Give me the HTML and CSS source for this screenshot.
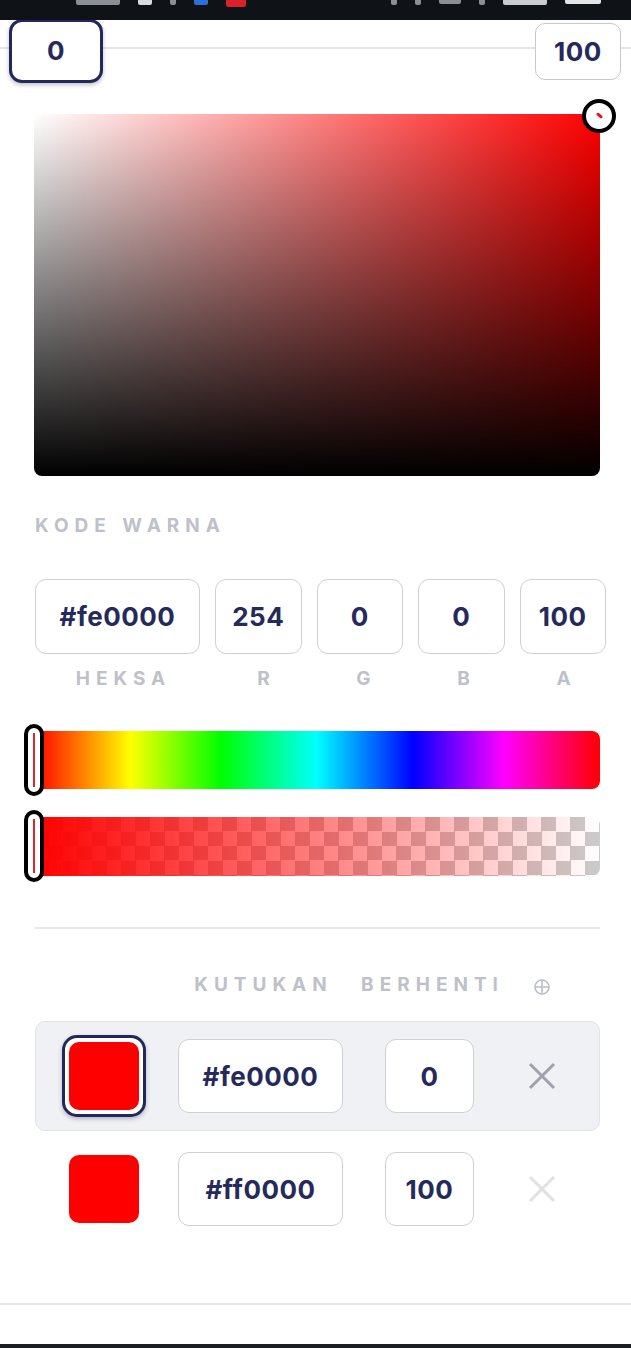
FILE: index.html
```html
<!DOCTYPE html>
<html lang="id">
<head>
  <meta charset="UTF-8">
  <meta name="viewport" content="width=device-width, initial-scale=1.0">
  <title>Pemilih Warna</title>
  <link rel="stylesheet" href="styles.css">
</head>
<body>

  <!-- status bar (cut off at the top of the capture) -->
  <div class="status-bar">
    <span class="sb sb-time"></span>
    <span class="sb sb-chat"></span>
    <span class="sb sb-dot"></span>
    <span class="sb sb-blue"></span>
    <span class="sb sb-red"></span>
    <span class="sb-spacer"></span>
    <span class="sb sb-dot"></span>
    <span class="sb sb-dot"></span>
    <span class="sb sb-speed"></span>
    <span class="sb sb-dot"></span>
    <span class="sb sb-signal"></span>
    <span class="sb sb-battery"></span>
  </div>

  <!-- range of the gradient -->
  <div class="range-row">
    <div class="range-box range-box-active">0</div>
    <div class="range-box">100</div>
  </div>

  <main class="picker">
    <div class="sat-area">
      <span class="sat-handle"></span>
    </div>

    <div class="section-label">KODE WARNA</div>

    <div class="code-row">
      <div class="field field-hex">#fe0000</div>
      <div class="field">254</div>
      <div class="field">0</div>
      <div class="field">0</div>
      <div class="field">100</div>
    </div>
    <div class="code-row code-labels">
      <span class="field-hex">HEKSA</span>
      <span>R</span>
      <span>G</span>
      <span>B</span>
      <span>A</span>
    </div>

    <div class="slider slider-hue">
      <span class="slider-handle"></span>
    </div>
    <div class="slider slider-alpha">
      <span class="slider-handle"></span>
    </div>

    <div class="divider"></div>

    <div class="stops-head">
      <span class="col-swatch"></span>
      <span class="col-hex">KUTUKAN</span>
      <span class="col-stop">BERHENTI</span>
      <span class="col-del">
        <svg width="18" height="18" viewBox="0 0 18 18" fill="none" stroke="#bbbec6" stroke-width="1.6">
          <circle cx="9" cy="9" r="7"/>
          <path d="M9 2v14M2 9h14"/>
        </svg>
      </span>
    </div>

    <div class="stop-row stop-row-active">
      <div class="col-swatch swatch swatch-active"><span class="swatch-color"></span></div>
      <div class="col-hex field">#fe0000</div>
      <div class="col-stop field">0</div>
      <div class="col-del">
        <svg width="28" height="28" viewBox="0 0 28 28" stroke="#9ea1ac" stroke-width="3">
          <path d="M2 2l24 24M26 2L2 26"/>
        </svg>
      </div>
    </div>

    <div class="stop-row">
      <div class="col-swatch swatch"><span class="swatch-color"></span></div>
      <div class="col-hex field">#ff0000</div>
      <div class="col-stop field">100</div>
      <div class="col-del">
        <svg width="28" height="28" viewBox="0 0 28 28" stroke="#e0e1e5" stroke-width="3">
          <path d="M2 2l24 24M26 2L2 26"/>
        </svg>
      </div>
    </div>
  </main>

  <div class="footer-line"></div>
  <div class="nav-bar"></div>

</body>
</html>
```

FILE: styles.css
```css
body {
  margin: 0;
  width: 631px;
  height: 1348px;
  overflow: hidden;
  background-color: #ffffff;
  font-family: Inter, "Noto Sans", sans-serif;
  color: #262a5b;
}

/* Status bar */
.status-bar {
  position: relative;
  z-index: 2;
  height: 20px;
  background-color: #0f1318;
  display: flex;
  align-items: flex-start;
  padding-left: 76px;
  padding-right: 30px;
}

.sb {
  display: block;
  height: 5px;
  margin-right: 18px;
  background-color: #8a8e95;
  border-radius: 0 0 2px 2px;
}

.sb-time { width: 44px; }
.sb-chat { width: 14px; background-color: #d8dadd; }
.sb-dot { width: 6px; }
.sb-blue { width: 14px; background-color: #2d6fd6; }
.sb-red { width: 20px; height: 7px; background-color: #d8212b; }
.sb-spacer { flex: 1; }
.sb-speed { width: 22px; height: 4px; }
.sb-signal { width: 44px; background-color: #c9cbce; }
.sb-battery { width: 36px; height: 4px; margin-right: 0; background-color: #e4e5e7; }

/* Range row */
.range-row {
  height: 62px;
  padding: 0 10px 0 9px;
  display: flex;
  align-items: center;
  justify-content: space-between;
  background: linear-gradient(#e4e4e7, #e4e4e7) 0 27px / 100% 2px no-repeat;
}

.range-box {
  width: 86px;
  height: 57px;
  box-sizing: border-box;
  border: 1.5px solid #c8c8cd;
  border-radius: 10px;
  background-color: #fff;
  display: flex;
  align-items: center;
  justify-content: center;
  font-size: 26px;
  font-weight: 700;
  letter-spacing: 0.5px;
}

.range-box-active {
  width: 94px;
  height: 64px;
  margin-top: -1px;
  border: 3px solid #23285a;
  border-radius: 13px;
  box-shadow: 0 2px 4px rgba(35, 40, 90, 0.3);
}

/* Picker */
.picker {
  padding: 0 31px 0 34px;
}

.sat-area {
  position: relative;
  margin-top: 32px;
  height: 362px;
  border-radius: 8px;
  background:
    linear-gradient(to top, #000000, rgba(0, 0, 0, 0)),
    linear-gradient(to right, #ffffff, #fe0000);
}

.sat-handle {
  position: absolute;
  top: -15px;
  right: -16px;
  width: 34px;
  height: 34px;
  box-sizing: border-box;
  border: 4px solid #000;
  border-radius: 50%;
  background-color: #fff;
}

.sat-handle::after {
  content: "";
  position: absolute;
  left: 10px;
  top: 11px;
  width: 7px;
  height: 3px;
  border-radius: 2px;
  background-color: #e8101a;
  transform: rotate(40deg);
}

.section-label,
.code-labels,
.stops-head {
  font-size: 19px;
  font-weight: 700;
  letter-spacing: 6px;
  line-height: 22px;
  color: #bec1c9;
}

.section-label {
  margin-top: 39px;
  padding-left: 1px;
}

.code-row {
  margin-top: 42px;
  margin-left: 1px;
  margin-right: -6px;
  display: flex;
  gap: 15px;
}

.code-row > * {
  flex: 1;
}

.code-row > .field-hex {
  flex: 0 0 165px;
}

.field {
  height: 75px;
  box-sizing: border-box;
  border: 1.5px solid #cfd0d6;
  border-radius: 11px;
  background-color: #fff;
  display: flex;
  align-items: center;
  justify-content: center;
  font-size: 26px;
  font-weight: 700;
  letter-spacing: 0.5px;
  color: #262a5b;
}

.code-labels {
  margin-top: 14px;
}

.code-labels span {
  text-align: center;
  padding-left: 6px;
}

/* Sliders */
.slider {
  position: relative;
  height: 58px;
  border-radius: 0 8px 8px 0;
}

.slider-hue {
  margin-top: 41px;
  background: linear-gradient(to right,
    #ff0000 0%, #ffff00 17%, #00ff00 33%, #00ffff 50%,
    #0000ff 67%, #ff00ff 83%, #ff0000 100%);
}

.slider-alpha {
  margin-top: 28px;
  height: 59px;
  background:
    linear-gradient(to right, rgba(254, 0, 0, 1), rgba(254, 0, 0, 0)),
    conic-gradient(#cbcbcb 25%, #ffffff 0 50%, #cbcbcb 0 75%, #ffffff 0) 0 0 / 29px 29px;
}

.slider-handle {
  position: absolute;
  left: -10px;
  top: -7px;
  width: 20px;
  height: 72px;
  box-sizing: border-box;
  border: 4px solid #000;
  border-radius: 10px;
  background: linear-gradient(#e3262c, #e3262c) center / 2px 54px no-repeat #fff;
}

.divider {
  margin-top: 51px;
  margin-left: 1px;
  height: 2px;
  background-color: #e7e8eb;
}

/* Colour stops */
.stops-head {
  margin-top: 45px;
  padding-left: 28px;
  display: flex;
  height: 22px;
}

.stops-head span {
  display: flex;
  justify-content: center;
  white-space: nowrap;
  padding-left: 6px;
  box-sizing: border-box;
}

.stops-head .col-del {
  padding-left: 0;
  align-items: center;
  padding-top: 4px;
}

.col-swatch { width: 84px; flex: none; }
.col-hex { width: 165px; margin-left: 32px; flex: none; }
.col-stop { width: 89px; margin-left: 42px; flex: none; }
.col-del {
  width: 60px;
  margin-left: 38px;
  flex: none;
  display: flex;
  align-items: center;
  justify-content: center;
}

.stop-row {
  height: 110px;
  box-sizing: border-box;
  margin-left: 1px;
  padding-left: 26px;
  border: 1px solid transparent;
  border-radius: 10px;
  display: flex;
  align-items: center;
}

.stop-row-active {
  margin-top: 25px;
  background-color: #f0f1f4;
  border-color: #e1e3e7;
}

.stop-row + .stop-row {
  margin-top: 3px;
}

.stop-row .field {
  height: 74px;
}

.swatch {
  height: 82px;
  box-sizing: border-box;
  padding: 4px;
  border: 3px solid transparent;
  border-radius: 15px;
  display: flex;
}

.swatch-active {
  border-color: #23285a;
  background-color: #fff;
  box-shadow: 0 2px 4px rgba(35, 40, 90, 0.3);
}

.swatch-color {
  flex: 1;
  border-radius: 10px;
  background-color: #fe0000;
}

.footer-line {
  margin-top: 59px;
  height: 2px;
  background-color: #e4e4e7;
}

.nav-bar {
  margin-top: 39px;
  height: 8px;
  background-color: #1b1e23;
}
```
